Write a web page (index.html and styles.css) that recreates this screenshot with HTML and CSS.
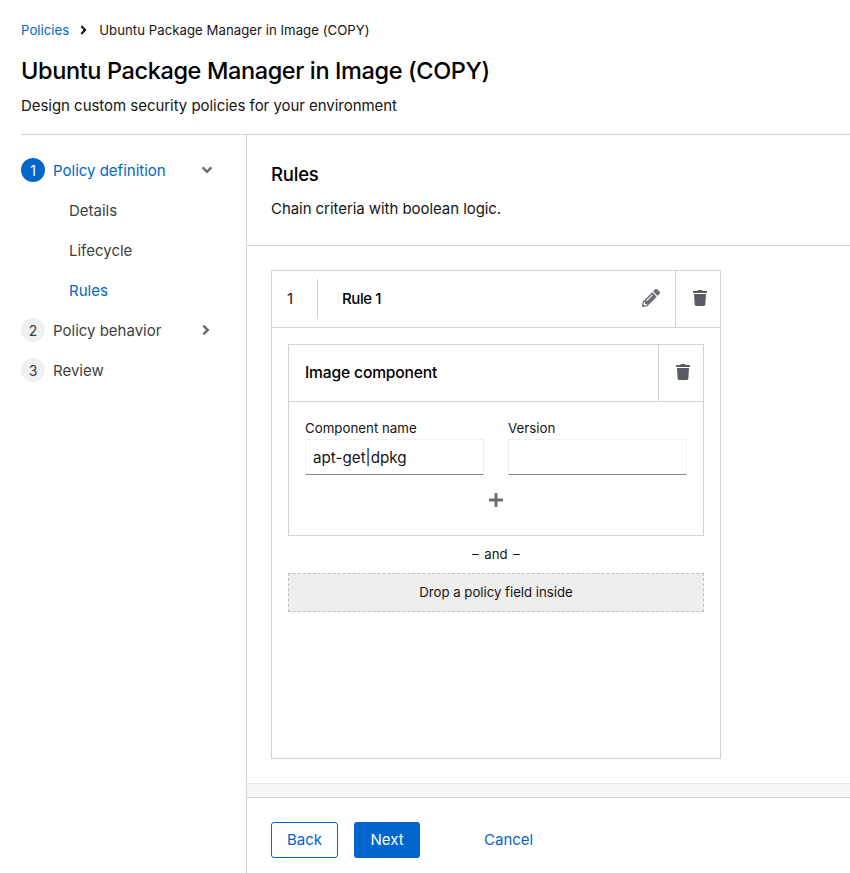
FILE: index.html
```html
<!DOCTYPE html>
<html lang="en">
<head>
    <meta charset="UTF-8">
    <meta name="viewport" content="width=device-width, initial-scale=1.0">
    <title>Ubuntu Package Manager in Image (COPY)</title>
    <link rel="stylesheet" href="styles.css">
</head>
<body>

<div class="page">
    <header class="page-header">
        <nav class="breadcrumb">
            <a class="link" href="#">Policies</a>
            <svg class="crumb-sep" viewBox="0 0 256 512"><path d="M224.3 273l-136 136c-9.4 9.4-24.6 9.4-33.9 0l-22.6-22.6c-9.4-9.4-9.4-24.6 0-33.9l96.4-96.4-96.4-96.4c-9.4-9.4-9.4-24.6 0-33.9L54.3 103c9.4-9.4 24.6-9.4 33.9 0l136 136c9.5 9.4 9.5 24.6.1 34z"/></svg>
            <span>Ubuntu Package Manager in Image (COPY)</span>
        </nav>
        <h1 class="page-title">Ubuntu Package Manager in Image (COPY)</h1>
        <p class="page-sub">Design custom security policies for your environment</p>
    </header>

    <div class="wizard">
        <aside class="wizard-nav">
            <div class="step step-current">
                <span class="step-num">1</span>
                <span class="step-label">Policy definition</span>
                <svg class="step-toggle toggle-down" viewBox="0 0 320 512"><path d="M143 352.3L7 216.3c-9.4-9.4-9.4-24.6 0-33.9l22.6-22.6c9.4-9.4 24.6-9.4 33.9 0l96.4 96.4 96.4-96.4c9.4-9.4 24.6-9.4 33.9 0l22.6 22.6c9.4 9.4 9.4 24.6 0 33.9l-136 136c-9.2 9.4-24.4 9.4-33.8 0z"/></svg>
            </div>
            <div class="substep">Details</div>
            <div class="substep">Lifecycle</div>
            <div class="substep substep-current">Rules</div>
            <div class="step">
                <span class="step-num">2</span>
                <span class="step-label">Policy behavior</span>
                <svg class="step-toggle toggle-right" viewBox="0 0 256 512"><path d="M224.3 273l-136 136c-9.4 9.4-24.6 9.4-33.9 0l-22.6-22.6c-9.4-9.4-9.4-24.6 0-33.9l96.4-96.4-96.4-96.4c-9.4-9.4-9.4-24.6 0-33.9L54.3 103c9.4-9.4 24.6-9.4 33.9 0l136 136c9.5 9.4 9.5 24.6.1 34z"/></svg>
            </div>
            <div class="step">
                <span class="step-num">3</span>
                <span class="step-label">Review</span>
            </div>
        </aside>

        <main class="wizard-main">
            <div class="main-head">
                <h2 class="main-title">Rules</h2>
                <p class="main-sub">Chain criteria with boolean logic.</p>
            </div>

            <div class="main-body">
                <section class="rule">
                    <div class="rule-head">
                        <span class="rule-num"><span>1</span></span>
                        <span class="rule-name">Rule 1</span>
                        <span class="rule-edit">
                            <svg class="icon-pencil" viewBox="0 0 512 512"><path d="M497.9 142.1l-46.1 46.1c-4.7 4.7-12.3 4.7-17 0l-111-111c-4.7-4.7-4.7-12.3 0-17l46.1-46.1c18.7-18.7 49.1-18.7 67.9 0l60.1 60.1c18.8 18.7 18.8 49.1 0 67.9zM284.2 99.8L21.6 362.4.4 483.9c-2.9 16.4 11.4 30.6 27.8 27.8l121.5-21.3 262.6-262.6c4.7-4.7 4.7-12.3 0-17l-111-111c-4.8-4.7-12.4-4.7-17.1 0zM124.1 339.9c-5.5-5.5-5.5-14.3 0-19.8l154-154c5.5-5.5 14.3-5.5 19.8 0s5.5 14.3 0 19.8l-154 154c-5.5 5.5-14.3 5.5-19.8 0zM88 424h48v36.3l-64.5 11.3-31.1-31.1L51.7 376H88v48z"/></svg>
                        </span>
                        <span class="head-btn">
                            <svg class="icon-trash" viewBox="0 0 448 512"><path d="M432 32H312l-9.4-18.7A24 24 0 0 0 281.1 0H166.8a23.72 23.72 0 0 0-21.4 13.3L136 32H16A16 16 0 0 0 0 48v32a16 16 0 0 0 16 16h416a16 16 0 0 0 16-16V48a16 16 0 0 0-16-16zM53.2 467a48 48 0 0 0 47.9 45h245.8a48 48 0 0 0 47.9-45L416 128H32z"/></svg>
                        </span>
                    </div>
                    <div class="rule-body">
                        <div class="field-card">
                            <div class="field-head">
                                <span class="field-name">Image component</span>
                                <span class="head-btn">
                                    <svg class="icon-trash" viewBox="0 0 448 512"><path d="M432 32H312l-9.4-18.7A24 24 0 0 0 281.1 0H166.8a23.72 23.72 0 0 0-21.4 13.3L136 32H16A16 16 0 0 0 0 48v32a16 16 0 0 0 16 16h416a16 16 0 0 0 16-16V48a16 16 0 0 0-16-16zM53.2 467a48 48 0 0 0 47.9 45h245.8a48 48 0 0 0 47.9-45L416 128H32z"/></svg>
                                </span>
                            </div>
                            <div class="field-body">
                                <div class="inputs">
                                    <label class="input-group">
                                        <span class="input-label">Component name</span>
                                        <input class="text-input" type="text" value="apt-get|dpkg">
                                    </label>
                                    <label class="input-group">
                                        <span class="input-label">Version</span>
                                        <input class="text-input" type="text">
                                    </label>
                                </div>
                                <div class="add-row">
                                    <svg class="icon-plus" viewBox="0 0 448 512"><path d="M416 208H272V64c0-17.67-14.33-32-32-32h-32c-17.67 0-32 14.33-32 32v144H32c-17.67 0-32 14.33-32 32v32c0 17.67 14.33 32 32 32h144v144c0 17.67 14.33 32 32 32h32c17.67 0 32-14.33 32-32V304h144c17.67 0 32-14.33 32-32v-32c0-17.67-14.33-32-32-32z"/></svg>
                                </div>
                            </div>
                        </div>
                        <div class="and-sep">– and –</div>
                        <div class="drop-zone">Drop a policy field inside</div>
                    </div>
                </section>
            </div>

            <footer class="wizard-footer">
                <button class="btn btn-secondary">Back</button>
                <button class="btn btn-primary">Next</button>
                <button class="btn btn-link">Cancel</button>
            </footer>
        </main>
    </div>
</div>

</body>
</html>
```

FILE: styles.css
```css
* {
    box-sizing: border-box;
}
body {
    margin: 0;
    font-family: Inter, "Open Sans", sans-serif;
    font-size: 16px;
    color: #151515;
    background-color: #fff;
}
.page {
    display: flex;
    flex-direction: column;
    height: 873px;
    overflow: hidden;
}
.link {
    color: #06c;
    text-decoration: none;
}

/* page header */
.page-header {
    margin-left: 21px;
    padding-top: 19px;
    height: 135px;
    border-bottom: 1px solid #d2d2d2;
}
.breadcrumb {
    display: flex;
    align-items: center;
    height: 21px;
    font-size: 13.2px;
    letter-spacing: 0.03px;
}
.crumb-sep {
    width: 7px;
    height: 14px;
    margin: 0 12px 0 11px;
    fill: #151515;
}
.page-title {
    margin: 14px 0 0;
    font-size: 23.5px;
    line-height: 34px;
    font-weight: 500;
    letter-spacing: -0.38px;
    color: #000;
}
.page-sub {
    margin: 6px 0 0;
    font-size: 15px;
    line-height: 24px;
    letter-spacing: -0.04px;
}

/* wizard */
.wizard {
    display: flex;
    flex: 1;
    min-height: 0;
    padding-left: 21px;
}
.wizard-nav {
    width: 226px;
    padding-top: 15px;
    border-right: 1px solid #d2d2d2;
    flex-shrink: 0;
}
.step {
    display: flex;
    align-items: center;
    height: 40px;
    font-size: 15px;
    color: #3c3f42;
}
.step-num {
    display: flex;
    align-items: center;
    justify-content: center;
    width: 24px;
    height: 24px;
    margin-right: 8px;
    border-radius: 50%;
    background-color: #f0f0f0;
    font-size: 14px;
    color: #3c3f42;
}
.step-current .step-num {
    background-color: #06c;
    color: #fff;
}
.step-current .step-label {
    color: #06c;
}
.step-label {
    flex: 1;
}
.step-toggle {
    height: 16px;
    fill: #6a6e73;
}
.toggle-down {
    width: 12px;
    margin-right: 33px;
}
.toggle-right {
    width: 10px;
    margin-right: 35px;
}
.substep {
    display: flex;
    align-items: center;
    height: 40px;
    padding-left: 48px;
    font-size: 15px;
    color: #3c3f42;
}
.substep-current {
    color: #06c;
}

/* main column */
.wizard-main {
    display: flex;
    flex-direction: column;
    flex: 1;
    min-width: 0;
}
.main-head {
    height: 111px;
    padding: 24px 24px 0;
    border-bottom: 1px solid #d2d2d2;
}
.main-title {
    margin: 0;
    font-size: 18.5px;
    line-height: 30px;
    font-weight: 500;
    letter-spacing: -0.2px;
    color: #000;
}
.main-sub {
    margin: 8px 0 0;
    font-size: 15px;
    line-height: 24px;
    letter-spacing: -0.06px;
}
.main-body {
    flex: 1;
    min-height: 0;
    padding: 24px 129px 24px 24px;
    border-bottom: 1px solid #e6e6e6;
}
.rule {
    display: flex;
    flex-direction: column;
    height: 489px;
    border: 1px solid #d2d2d2;
}
.rule-head {
    display: flex;
    align-items: center;
    height: 57px;
    border-bottom: 1px solid #d2d2d2;
    flex-shrink: 0;
}
.rule-num {
    display: flex;
    align-items: center;
    width: 46px;
    height: 40px;
    padding-left: 15px;
    padding-bottom: 2px;
    border-right: 1px solid #d2d2d2;
    font-size: 15px;
}
.rule-name {
    flex: 1;
    padding-left: 24px;
    padding-bottom: 2px;
    font-size: 15px;
    font-weight: 500;
    letter-spacing: -0.4px;
    color: #000;
}
.rule-edit {
    display: flex;
    align-items: center;
    padding-right: 15px;
    padding-bottom: 2px;
}
.icon-pencil {
    width: 18px;
    height: 18px;
    fill: #6a6e73;
}
.head-btn {
    display: flex;
    align-items: center;
    justify-content: center;
    width: 45px;
    height: 100%;
    padding-left: 4px;
    padding-bottom: 3px;
    border-left: 1px solid #d2d2d2;
    flex-shrink: 0;
}
.icon-trash {
    width: 14px;
    height: 16px;
    fill: #585b5f;
}
.rule-body {
    padding: 16px 16px 0;
}
.field-card {
    height: 192px;
    border: 1px solid #d2d2d2;
}
.field-head {
    display: flex;
    align-items: center;
    height: 57px;
    border-bottom: 1px solid #d2d2d2;
}
.field-name {
    flex: 1;
    padding-left: 16px;
    padding-bottom: 2px;
    font-size: 15.6px;
    font-weight: 500;
    letter-spacing: -0.15px;
    color: #000;
}
.field-body {
    padding: 16px 16px 0;
}
.inputs {
    display: flex;
    gap: 24px;
}
.input-group {
    display: flex;
    flex-direction: column;
    flex: 1;
    min-width: 0;
}
.input-label {
    height: 21px;
    font-size: 13.3px;
    line-height: 21px;
}
.text-input {
    width: 100%;
    height: 36px;
    padding: 0 7px;
    border: 1px solid #f0f0f0;
    border-bottom-color: #8a8d90;
    border-radius: 0;
    outline: none;
    font-family: inherit;
    font-size: 15.2px;
    color: #151515;
}
.add-row {
    display: flex;
    justify-content: center;
    padding-top: 17px;
}
.icon-plus {
    width: 14px;
    height: 16px;
    fill: #6a6e73;
}
.and-sep {
    height: 37px;
    font-size: 13.2px;
    line-height: 37px;
    word-spacing: 2px;
    text-align: center;
}
.drop-zone {
    display: flex;
    align-items: center;
    justify-content: center;
    height: 39px;
    padding-bottom: 1px;
    border: 1px dashed #c4c4c4;
    background-color: #eee;
    font-size: 13.2px;
}

/* footer */
.wizard-footer {
    display: flex;
    align-items: center;
    height: 76px;
    margin-top: 13px;
    padding: 8px 24px 0;
    border-top: 1px solid #d2d2d2;
    gap: 16px;
    flex-shrink: 0;
    background-color: #fff;
    box-shadow: 0 -13px 0 #f7f7f7;
}
.btn {
    height: 36px;
    padding: 0;
    border: none;
    border-radius: 3px;
    background: none;
    font-family: inherit;
    font-size: 15px;
}
.btn-secondary {
    width: 67px;
    border: 1px solid #06c;
    color: #06c;
}
.btn-primary {
    width: 66px;
    background-color: #06c;
    color: #fff;
}
.btn-link {
    margin-left: 48px;
    color: #06c;
}
```
